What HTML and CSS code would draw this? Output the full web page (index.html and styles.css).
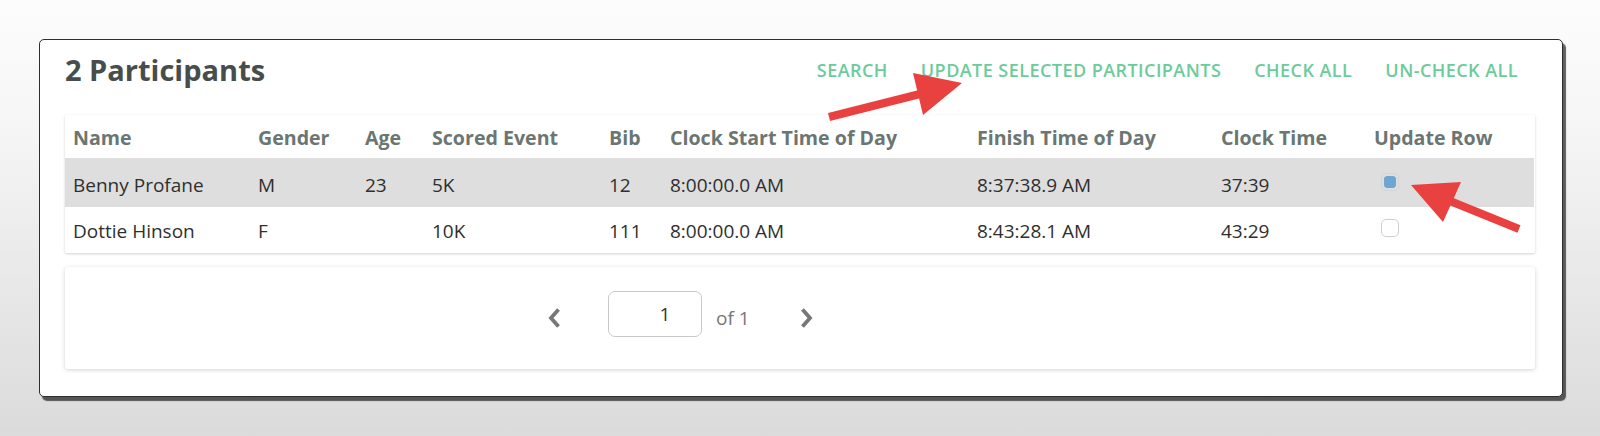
FILE: index.html
```html
<!DOCTYPE html>
<html lang="en">
<head>
<meta charset="utf-8">
<title>Participants</title>
<link rel="stylesheet" href="styles.css">
</head>
<body>
<div class="page">
  <section class="card">
    <header class="card-head">
      <h1 class="title">2 Participants</h1>
      <nav class="actions">
        <a class="action" href="#">Search</a>
        <a class="action" href="#">Update Selected Participants</a>
        <a class="action" href="#">Check All</a>
        <a class="action" href="#">Un-Check All</a>
      </nav>
    </header>

    <div class="table-box">
      <table class="grid">
        <colgroup>
          <col class="c-name"><col class="c-gender"><col class="c-age"><col class="c-event"><col class="c-bib"><col class="c-start"><col class="c-finish"><col class="c-clock"><col class="c-update">
        </colgroup>
        <thead>
          <tr>
            <th>Name</th><th>Gender</th><th>Age</th><th>Scored Event</th><th>Bib</th><th>Clock Start Time of Day</th><th>Finish Time of Day</th><th>Clock Time</th><th>Update Row</th>
          </tr>
        </thead>
        <tbody>
          <tr class="row row-selected">
            <td>Benny Profane</td><td>M</td><td>23</td><td>5K</td><td>12</td><td>8:00:00.0 AM</td><td>8:37:38.9 AM</td><td>37:39</td>
            <td class="cell-check"><span class="check checked"></span></td>
          </tr>
          <tr class="row">
            <td>Dottie Hinson</td><td>F</td><td></td><td>10K</td><td>111</td><td>8:00:00.0 AM</td><td>8:43:28.1 AM</td><td>43:29</td>
            <td class="cell-check"><span class="check"></span></td>
          </tr>
        </tbody>
      </table>
    </div>

    <div class="pager">
      <button class="pager-btn prev" aria-label="Previous">
        <svg width="13" height="22" viewBox="0 0 13 22"><path d="M10.5 2.5 L3 11 L10.5 19.5" fill="none" stroke="#777" stroke-width="3.8" stroke-linejoin="miter"/></svg>
      </button>
      <input class="pager-input" type="text" value="1">
      <span class="pager-of">of 1</span>
      <button class="pager-btn next" aria-label="Next">
        <svg width="13" height="22" viewBox="0 0 13 22"><path d="M2.5 2.5 L10 11 L2.5 19.5" fill="none" stroke="#777" stroke-width="3.8" stroke-linejoin="miter"/></svg>
      </button>
    </div>
  </section>

  <svg class="annotations" width="1600" height="436" viewBox="0 0 1600 436">
    <line x1="829" y1="117" x2="920" y2="94" stroke="#e8413f" stroke-width="8"/>
    <polygon points="913,73 962,83 923,115" fill="#e8413f"/>
    <line x1="1519" y1="229" x2="1450" y2="201" stroke="#e8413f" stroke-width="8"/>
    <polygon points="1411,185 1461,182 1443,222" fill="#e8413f"/>
  </svg>
</div>
</body>
</html>
```

FILE: styles.css
```css
* { box-sizing: border-box; }

html, body {
  margin: 0;
  padding: 0;
}

body {
  width: 1600px;
  height: 436px;
  overflow: hidden;
  font-family: "Open Sans", "Noto Sans", sans-serif;
  color: #333;
  background: linear-gradient(to bottom, #fcfcfc 0%, #f7f7f7 25%, #dbdbdb 100%);
}

.page {
  position: relative;
  width: 1600px;
  height: 436px;
  padding: 39px 0 0 39px;
}

.card {
  width: 1524px;
  background: #fff;
  border: 1px solid #2e2e2e;
  border-radius: 5px;
  box-shadow: 3px 4px 1px rgba(0, 0, 0, 0.62);
  padding: 10px 27px 27px 25px;
}

.card-head {
  display: flex;
  align-items: center;
  justify-content: space-between;
  height: 40px;
  margin-bottom: 25px;
}

.title {
  margin: 0;
  font-size: 29px;
  line-height: 40px;
  font-weight: 700;
  color: #474d4b;
}

.actions {
  display: flex;
  gap: 33px;
  margin-right: 17px;
}

.action {
  font-size: 18px;
  line-height: 40px;
  font-weight: 600;
  letter-spacing: 0.45px;
  text-transform: uppercase;
  text-decoration: none;
  color: #6ccb9b;
}

.table-box {
  background: #fff;
  border-radius: 2px;
  box-shadow: 0 1px 3px rgba(0, 0, 0, 0.18);
}

.grid {
  width: 1469px;
  border-collapse: collapse;
  table-layout: fixed;
}

.c-name { width: 185px; }
.c-gender { width: 107px; }
.c-age { width: 67px; }
.c-event { width: 177px; }
.c-bib { width: 61px; }
.c-start { width: 307px; }
.c-finish { width: 244px; }
.c-clock { width: 153px; }
.c-update { width: 168px; }

.grid th {
  text-align: left;
  font-size: 19.6px;
  font-weight: 700;
  line-height: 27px;
  color: #6b7672;
  padding: 9px 8px 7px;
  white-space: nowrap;
}

.grid td {
  font-size: 19px;
  line-height: 26px;
  color: #2f2f2f;
  padding: 11px 8px 9px;
  white-space: nowrap;
}

.row-selected { background: #dedede; }

.row-selected td {
  padding-top: 14px;
  padding-bottom: 9px;
}

.grid td.cell-check {
  vertical-align: top;
}

.check {
  display: block;
  width: 18px;
  height: 18px;
  margin: 1px 0 0 7px;
  border: 1px solid #cfcfcf;
  border-radius: 5px;
  background: #fff;
}

.check.checked {
  border-color: #d6d6d6;
  padding: 2px;
  background: #fff content-box;
  position: relative;
}

.check.checked::after {
  content: "";
  position: absolute;
  left: 2px;
  top: 2px;
  right: 2px;
  bottom: 2px;
  border-radius: 3px;
  background: #6ea6d1;
}

.pager {
  display: flex;
  align-items: center;
  height: 102px;
  margin-top: 14px;
  padding-left: 483px;
  background: #fff;
  border-radius: 3px;
  box-shadow: 0 1px 4px rgba(0, 0, 0, 0.18);
}

.pager-btn {
  display: flex;
  padding: 0;
  border: 0;
  background: none;
}

.pager-input {
  width: 94px;
  height: 46px;
  margin: 0 14px 8px 47px;
  padding: 0 0 0 20px;
  border: 1px solid #c9c9c9;
  border-radius: 7px;
  font-family: "Open Sans", "Noto Sans", sans-serif;
  font-size: 19px;
  color: #333;
  text-align: center;
  background: #fff;
}

.pager-of {
  font-size: 19px;
  color: #777;
  margin-right: 50px;
}

.annotations {
  position: absolute;
  left: 0;
  top: 0;
  pointer-events: none;
}
```
